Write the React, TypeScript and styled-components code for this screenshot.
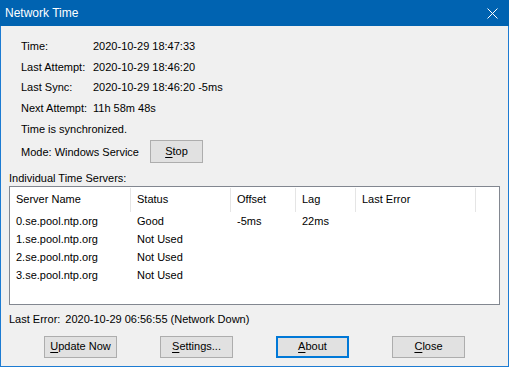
import styled, { createGlobalStyle } from 'styled-components';

const GlobalStyle = createGlobalStyle`
  html, body {
    margin: 0;
    padding: 0;
    background: #f0f0f0;
  }
  body {
    font-family: "Liberation Sans", Arial, sans-serif;
    font-size: 11px;
    color: #000;
  }
`;

const info = [
  { label: 'Time:', value: '2020-10-29 18:47:33' },
  { label: 'Last Attempt:', value: '2020-10-29 18:46:20' },
  { label: 'Last Sync:', value: '2020-10-29 18:46:20 -5ms' },
  { label: 'Next Attempt:', value: '11h 58m 48s' },
];

const columns = [
  { name: 'Server Name', width: 121 },
  { name: 'Status', width: 100 },
  { name: 'Offset', width: 65 },
  { name: 'Lag', width: 60 },
  { name: 'Last Error', width: 120 },
];

const servers = [
  ['0.se.pool.ntp.org', 'Good', '-5ms', '22ms', ''],
  ['1.se.pool.ntp.org', 'Not Used', '', '', ''],
  ['2.se.pool.ntp.org', 'Not Used', '', '', ''],
  ['3.se.pool.ntp.org', 'Not Used', '', '', ''],
];

// first letter of each button is the keyboard accelerator
const buttons = [
  { key: 'U', rest: 'pdate Now' },
  { key: 'S', rest: 'ettings...' },
  { key: 'A', rest: 'bout', focused: true },
  { key: 'C', rest: 'lose' },
];

const App = () => {
  return (
    <>
      <GlobalStyle />
      <Window>
        <TitleBar>
          <Title>Network Time</Title>
          <CloseIcon width="11" height="11" viewBox="0 0 11 11">
            <path d="M0.5 0.5 L10.5 10.5 M10.5 0.5 L0.5 10.5" stroke="#fff" strokeWidth="1" />
          </CloseIcon>
        </TitleBar>
        <Body>
          <InfoGrid>
            {info.map((row) => (
              <InfoRow key={row.label}>
                <span>{row.label}</span>
                <span>{row.value}</span>
              </InfoRow>
            ))}
          </InfoGrid>
          <StatusLine>Time is synchronized.</StatusLine>
          <ModeRow>
            <ModeText>Mode: Windows Service</ModeText>
            <Button $width={53} $height={23}>
              <u>S</u>top
            </Button>
          </ModeRow>

          <SectionLabel>Individual Time Servers:</SectionLabel>
          <ListBox>
            <HeaderRow>
              {columns.map((c) => (
                <HeaderCell key={c.name} $width={c.width}>
                  {c.name}
                </HeaderCell>
              ))}
            </HeaderRow>
            {servers.map((s) => (
              <ListRow key={s[0]}>
                {s.map((cell, i) => (
                  <ListCell key={i} $width={columns[i].width}>
                    {cell}
                  </ListCell>
                ))}
              </ListRow>
            ))}
          </ListBox>

          <ErrorLine>
            <span>Last Error:</span>
            <span>2020-10-29 06:56:55 (Network Down)</span>
          </ErrorLine>

          <ButtonRow>
            {buttons.map((b) => (
              <Button key={b.key} $width={73} $height={22} $focused={b.focused}>
                <u>{b.key}</u>
                {b.rest}
              </Button>
            ))}
          </ButtonRow>
        </Body>
      </Window>
    </>
  );
};

const Window = styled.div`
  width: 509px;
  height: 367px;
  box-sizing: border-box;
  border: 1px solid #1c7bd2;
  border-top: none;
  display: flex;
  flex-direction: column;
  background: #f0f0f0;
`;

const TitleBar = styled.div`
  height: 26px;
  margin: 0 -1px;
  background: #0063b1;
  display: flex;
  align-items: center;
  justify-content: space-between;
  padding: 0 11px 0 5px;
`;

const Title = styled.span`
  color: #fff;
  font-size: 12px;
  padding-bottom: 1px;
`;

const CloseIcon = styled.svg`
  display: block;
`;

const Body = styled.div`
  flex: 1;
  display: flex;
  flex-direction: column;
  padding: 10px 8px 0;
`;

const InfoGrid = styled.div`
  display: flex;
  flex-direction: column;
  padding-left: 12px;
`;

const InfoRow = styled.div`
  display: grid;
  grid-template-columns: 72px auto;
  height: 20.6px;
  align-items: center;
`;

const StatusLine = styled.div`
  height: 20.6px;
  display: flex;
  align-items: center;
  padding-left: 12px;
`;

const ModeRow = styled.div`
  display: flex;
  align-items: center;
  padding-left: 12px;
  margin-top: 1px;
  height: 24px;
`;

const ModeText = styled.span`
  width: 129px;
`;

const Button = styled.div<{ $width: number; $height: number; $focused?: boolean }>`
  width: ${(p) => p.$width}px;
  height: ${(p) => p.$height}px;
  box-sizing: border-box;
  display: flex;
  align-items: center;
  justify-content: center;
  background: #e1e1e1;
  border: ${(p) => (p.$focused ? '2px solid #0078d7' : '1px solid #adadad')};
  padding-bottom: 1px;

  u {
    text-underline-offset: 2px;
  }
`;

const SectionLabel = styled.div`
  margin-top: 7px;
  height: 15px;
  line-height: 14px;
`;

const ListBox = styled.div`
  height: 119px;
  box-sizing: border-box;
  border: 1px solid #828790;
  background: #fff;
`;

const HeaderRow = styled.div`
  display: flex;
  height: 25px;
  padding-top: 1px;
  box-sizing: border-box;
`;

const HeaderCell = styled.div<{ $width: number }>`
  width: ${(p) => p.$width}px;
  box-sizing: border-box;
  display: flex;
  align-items: center;
  padding-left: 6px;
  padding-bottom: 1px;
  border-right: 1px solid #e5e5e5;
`;

const ListRow = styled.div`
  display: flex;
  height: 18px;
`;

const ListCell = styled.div<{ $width: number }>`
  width: ${(p) => p.$width}px;
  box-sizing: border-box;
  display: flex;
  align-items: center;
  padding-left: 6px;
  white-space: nowrap;
`;

const ErrorLine = styled.div`
  display: flex;
  gap: 5px;
  margin-top: 7px;
  height: 14px;
  align-items: center;
`;

const ButtonRow = styled.div`
  display: flex;
  justify-content: space-evenly;
  margin: 10px -8px 0;
`;

export default App;
